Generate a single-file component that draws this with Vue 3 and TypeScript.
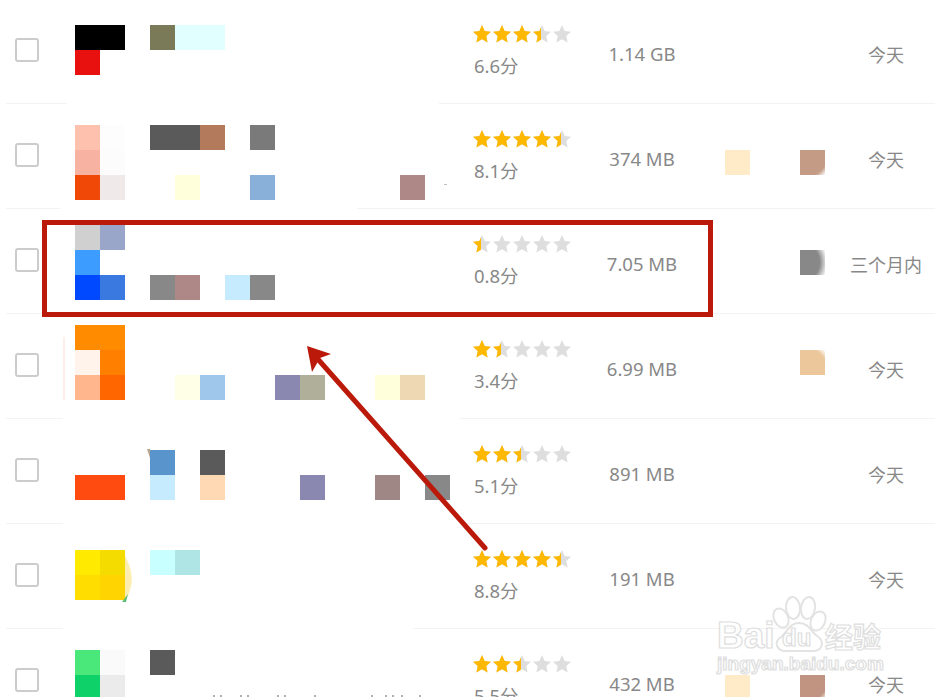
<template>
  <div class="page">
    <div v-for="(file, i) in files" :key="i" class="row">
      <span class="sep-mask" :style="{ left: file.maskLeft + 'px', width: file.maskWidth + 'px' }"></span>
      <span class="check"></span>
      <div class="mosaic" :style="{ marginTop: file.top + 'px' }">
        <span
          v-for="(cell, j) in file.cells"
          :key="j"
          class="cell"
          :style="{ gridColumn: cell[0] + 1, gridRow: cell[1] + 1, background: cell[2] }"
        ></span>
      </div>
      <div class="rating">
        <div class="stars">
          <div class="star-layer grey">
            <svg v-for="n in 5" :key="n" viewBox="0 0 20 20"><path :d="starPath" /></svg>
          </div>
          <div class="star-layer gold" :style="{ width: starWidth(file.stars) + 'px' }">
            <svg v-for="n in 5" :key="n" viewBox="0 0 20 20"><path :d="starPath" /></svg>
          </div>
        </div>
        <div class="score">{{ file.score }}分</div>
      </div>
      <div class="size">{{ file.size }}</div>
      <div class="slot">
        <span v-if="file.slotA" class="blot" :style="{ marginTop: file.slotTop + 'px', background: file.slotA }"></span>
      </div>
      <div class="slot second">
        <span v-if="file.slotB" class="blot" :style="{ marginTop: file.slotTop + 'px', background: file.slotB }"></span>
      </div>
      <div class="date">{{ file.date }}</div>
    </div>

    <div class="highlight"></div>

    <!-- leftovers of the mosaic: edge smears and cut off text -->
    <svg class="overlay" viewBox="0 0 935 697">
      <rect x="63" y="337" width="2" height="63" fill="#fdeee8" />
      <path d="M147 449 L150 449 L150 458Z" fill="#b9a58c" />
      <rect x="444" y="184" width="3" height="1" fill="#b8c0c8" />
      <path d="M125 556 C131 566 134 580 130 590 C129 594 127 598 125 600Z" fill="#fdeeb0" />
      <path d="M122 602 L128 594 L126 602Z" fill="#5fbb78" />
      <rect v-for="x in specks" :key="x" :x="x" y="695" width="2" height="2" fill="#b8b0a8" />
    </svg>

    <svg class="overlay arrow" viewBox="0 0 935 697">
      <line x1="485" y1="548" x2="316" y2="357" />
      <polygon points="307,346 331,354 320,358 312,372" />
    </svg>

    <svg class="watermark" viewBox="0 0 175 85">
      <g class="mark">
        <ellipse cx="66" cy="22" rx="7" ry="10" transform="rotate(-25 66 22)" />
        <ellipse cx="78" cy="12" rx="7" ry="11" transform="rotate(-5 78 12)" />
        <ellipse cx="93" cy="12" rx="7" ry="11" transform="rotate(8 93 12)" />
        <ellipse cx="103" cy="25" rx="7" ry="10" transform="rotate(25 103 25)" />
        <path d="M84 27 C74 27 72 37 66 41 C58 46 62 56 72 55 L96 55 C108 56 110 45 102 40 C96 36 94 27 84 27Z" />
      </g>
      <text x="2" y="52" class="big">Bai</text>
      <text x="67" y="50" class="du">du</text>
      <text x="110" y="52" class="cn">经验</text>
      <text x="2" y="74" class="url">jingyan.baidu.com</text>
    </svg>
  </div>
</template>

<script setup lang="ts">
type Cell = [number, number, string]

interface FileRow {
  top: number
  cells: Cell[]
  stars: number
  score: string
  size: string
  slotA?: string
  slotB?: string
  slotTop?: number
  date: string
  maskLeft: number
  maskWidth: number
}

const starPath = 'M10 1l2.7 5.9 6.3.8-4.7 4.4 1.3 6.4L10 15.3l-5.6 3.2 1.3-6.4L1 7.7l6.3-.8z'

const specks = [213, 220, 240, 247, 277, 284, 314, 371, 385, 392, 401, 419]

const starWidth = (stars: number) => Math.floor(stars) * 20 + (stars % 1 ? 9 : 0)

const files: FileRow[] = [
  {
    top: 26,
    cells: [
      [0, 0, '#000'], [1, 0, '#000'], [3, 0, '#7a7a58'], [4, 0, '#e2ffff'], [5, 0, '#e2ffff'],
      [0, 1, '#e91010'],
    ],
    stars: 3.5, score: '6.6', size: '1.14 GB', date: '今天', maskLeft: 61, maskWidth: 372,
  },
  {
    top: 21,
    cells: [
      [0, 0, '#fdc1ad'], [1, 0, '#fdfdfd'], [3, 0, '#5a5a5a'], [4, 0, '#5a5a5a'], [5, 0, '#b47a5c'], [7, 0, '#7a7a7a'],
      [0, 1, '#f7b2a2'], [1, 1, '#fcfcfc'],
      [0, 2, '#ef4807'], [1, 2, '#efe9e9'], [4, 2, '#ffffdc'], [7, 2, '#88b0d9'], [13, 2, '#ae8787'],
    ],
    stars: 4.5, score: '8.1', size: '374 MB', slotA: '#ffebc8',
    slotB: 'radial-gradient(circle at 0 0, #c49c86 82%, #fff 100%)', slotTop: 46, date: '今天',
    maskLeft: 54, maskWidth: 297,
  },
  {
    top: 16,
    cells: [
      [0, 0, '#d0d0d0'], [1, 0, '#9aa5ca'], [0, 1, '#3d9cff'],
      [0, 2, '#0049ff'], [1, 2, '#3a7ae0'], [3, 2, '#888'], [4, 2, '#ae8787'], [6, 2, '#c6ebff'], [7, 2, '#888'],
    ],
    stars: 0.5, score: '0.8', size: '7.05 MB', slotB: 'radial-gradient(circle at 0 50%, #888 70%, #fff 100%)',
    slotTop: 41, date: '三个月内', maskLeft: 0, maskWidth: 0,
  },
  {
    top: 11,
    cells: [
      [0, 0, '#ff8c00'], [1, 0, '#ff8c00'], [0, 1, '#fff3ec'], [1, 1, '#ff8000'],
      [0, 2, '#ffb68c'], [1, 2, '#ff6600'], [4, 2, '#ffffe8'], [5, 2, '#9fc7ec'], [8, 2, '#8a87b0'], [9, 2, '#b0b09a'],
      [12, 2, '#ffffdc'], [13, 2, '#edd8b3'],
    ],
    stars: 1.5, score: '3.4', size: '6.99 MB', slotB: 'radial-gradient(circle at 0 100%, #ecc79c 82%, #fff 100%)',
    slotTop: 36, date: '今天', maskLeft: 57, maskWidth: 397,
  },
  {
    top: 31,
    cells: [
      [3, 0, '#5a94cc'], [5, 0, '#5a5a5a'],
      [0, 1, '#ff4a10'], [1, 1, '#ff4a10'], [3, 1, '#c6ebff'], [5, 1, '#ffd9b3'], [9, 1, '#8a87b0'], [12, 1, '#9e8784'], [14, 1, '#888'],
    ],
    stars: 2.5, score: '5.1', size: '891 MB', date: '今天', maskLeft: 57, maskWidth: 402,
  },
  {
    top: 26,
    cells: [
      [0, 0, '#ffea00'], [1, 0, '#f5dc00'], [3, 0, '#c8ffff'], [4, 0, '#b0e5e5'],
      [0, 1, '#ffdd00'], [1, 1, '#ffd400'],
    ],
    stars: 4.5, score: '8.8', size: '191 MB', date: '今天', maskLeft: 57, maskWidth: 350,
  },
  {
    top: 21,
    cells: [
      [0, 0, '#4ae87a'], [1, 0, '#fafafa'], [3, 0, '#5a5a5a'],
      [0, 1, '#0fd16a'], [1, 1, '#ebebeb'],
    ],
    stars: 2.5, score: '5.5', size: '432 MB', slotA: '#ffebc8',
    slotB: 'radial-gradient(circle at 0 0, #c09480 82%, #fff 100%)', slotTop: 46, date: '今天',
    maskLeft: 0, maskWidth: 0,
  },
]
</script>

<style>
html,
body {
  margin: 0;
  overflow: hidden;
  background: #fff;
}
</style>

<style scoped>
.page {
  position: relative;
  width: 935px;
  height: 697px;
  overflow: hidden;
  font-family: "Noto Sans", "Noto Sans CJK SC", sans-serif;
  color: #888;
}

.row {
  position: relative;
  display: flex;
  align-items: center;
  box-sizing: border-box;
  height: 105px;
  margin-left: 6px;
  padding: 0 0 2px 9px;
  border-bottom: 1px solid #f3f3f3;
}

.row:first-child {
  margin-top: -1px;
}

.sep-mask {
  position: absolute;
  bottom: -1px;
  height: 1px;
  background: #fff;
}

.check {
  flex: none;
  box-sizing: border-box;
  width: 24px;
  height: 24px;
  margin-right: 36px;
  border: 2px solid #ccc;
  border-radius: 3px;
}

.mosaic {
  flex: none;
  align-self: flex-start;
  display: grid;
  grid-template-columns: repeat(15, 25px);
  grid-auto-rows: 25px;
  width: 398px;
}

.rating {
  flex: none;
  width: 127px;
  padding-top: 2px;
}

.stars {
  position: relative;
  height: 20px;
  margin-left: -1px;
}

.star-layer {
  position: absolute;
  top: 0;
  left: 0;
  display: flex;
  overflow: hidden;
  height: 20px;
}

.star-layer svg {
  flex: none;
  width: 20px;
  height: 20px;
}

.grey {
  fill: #dedede;
}

.gold {
  fill: #ffb800;
}

.score {
  margin-top: 10px;
  padding-left: 1px;
  font-size: 18.5px;
  line-height: 24px;
}

.size {
  flex: none;
  width: 84px;
  margin-top: 7px;
  margin-right: 41px;
  font-size: 18.5px;
  line-height: 24px;
  text-align: center;
  white-space: nowrap;
}

.slot {
  flex: none;
  align-self: flex-start;
  width: 25px;
  height: 100%;
}

.slot.second {
  margin-left: 50px;
}

.blot {
  display: block;
  width: 25px;
  height: 25px;
}

.date {
  flex: none;
  width: 98px;
  margin-top: 10px;
  margin-left: 12px;
  font-size: 18px;
  line-height: 24px;
  text-align: center;
  white-space: nowrap;
}

.cell {
  display: block;
}

.highlight {
  position: absolute;
  top: 220px;
  left: 42px;
  box-sizing: border-box;
  width: 671px;
  height: 97px;
  border: 5px solid #bb1a0a;
}

.overlay {
  position: absolute;
  top: 0;
  left: 0;
  width: 935px;
  height: 697px;
  pointer-events: none;
}

.arrow line {
  stroke: #bb1a0a;
  stroke-width: 5;
  stroke-linecap: round;
}

.arrow polygon {
  fill: #bb1a0a;
}

.watermark {
  position: absolute;
  top: 596px;
  left: 715px;
  width: 175px;
  height: 85px;
}

.mark ellipse,
.mark path {
  fill: #fff;
  stroke: #e3e3e3;
  stroke-width: 2;
}

.watermark text {
  fill: #fff;
  stroke: #dedede;
  stroke-width: 1.2;
  font-family: "Liberation Sans", "Noto Sans CJK SC", sans-serif;
  font-weight: 700;
}

.big {
  font-size: 37px;
}

.du {
  font-size: 24px;
}

.cn {
  font-size: 28px;
}

.url {
  font-size: 19px;
  font-weight: 400;
}
</style>
